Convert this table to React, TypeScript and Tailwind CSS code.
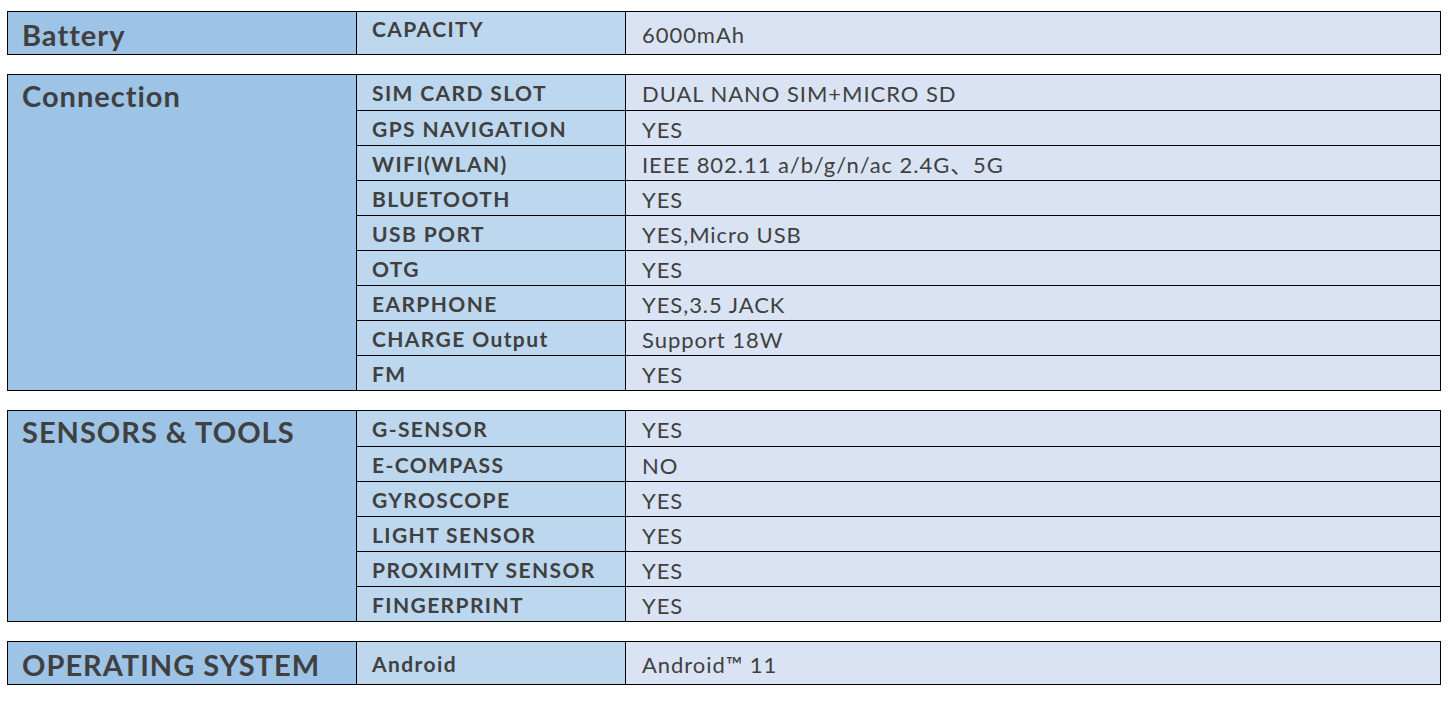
import React from 'react'

type Row = [string, string]

interface SpecSection {
    title: string;
    rows: Row[];
    align: 'top' | 'center';
}

const sections: SpecSection[] = [
    { title: 'Battery', align: 'center', rows: [['CAPACITY', '6000mAh']] },
    {
        title: 'Connection',
        align: 'top',
        rows: [
            ['SIM CARD SLOT', 'DUAL NANO SIM+MICRO SD'],
            ['GPS NAVIGATION', 'YES'],
            ['WIFI(WLAN)', 'IEEE 802.11 a/b/g/n/ac 2.4G、5G'],
            ['BLUETOOTH', 'YES'],
            ['USB PORT', 'YES,Micro USB'],
            ['OTG', 'YES'],
            ['EARPHONE', 'YES,3.5 JACK'],
            ['CHARGE Output', 'Support 18W'],
            ['FM', 'YES'],
        ],
    },
    {
        title: 'SENSORS & TOOLS',
        align: 'top',
        rows: [
            ['G-SENSOR', 'YES'],
            ['E-COMPASS', 'NO'],
            ['GYROSCOPE', 'YES'],
            ['LIGHT SENSOR', 'YES'],
            ['PROXIMITY SENSOR', 'YES'],
            ['FINGERPRINT', 'YES'],
        ],
    },
    { title: 'OPERATING SYSTEM', align: 'center', rows: [['Android', 'Android™ 11']] },
]

function SpecBlock({ section }: { section: SpecSection }) {
    const single = section.rows.length === 1
    const isBattery = section.title === 'Battery'

    return (
        <div className="flex w-[1434px] border border-black">
            {/* group title */}
            <div
                className={
                    section.align === 'top'
                        ? 'w-[349px] shrink-0 border-r border-black bg-[#9dc3e6] pl-[14px] pt-[4px] text-[29px] font-bold leading-[34px] tracking-[1px]'
                        : 'flex w-[349px] shrink-0 items-center border-r border-black bg-[#9dc3e6] pl-[14px] pt-[3px] text-[29px] font-bold leading-[34px] tracking-[1px]'
                }
            >
                {section.title}
            </div>

            <div className="flex flex-1 flex-col">
                {section.rows.map(([label, value], i) => (
                    <div
                        key={label}
                        className={
                            (single ? 'h-[42px] ' : 'h-[35px] ') +
                            (i > 0 ? 'border-t border-black ' : '') +
                            'flex'
                        }
                    >
                        <div
                            className={
                                isBattery
                                    ? 'w-[269px] shrink-0 border-r border-black bg-[#bdd7ee] pl-[15px] pt-[4px] text-[21px] font-bold leading-[26px] tracking-[1.4px]'
                                    : 'flex w-[269px] shrink-0 items-center border-r border-black bg-[#bdd7ee] pl-[15px] pt-[1px] text-[21px] font-bold leading-[26px] tracking-[1.4px]'
                            }
                        >
                            {label}
                        </div>
                        <div className="flex flex-1 items-center bg-[#dae3f3] pl-[16px] pt-[3px] text-[22px] leading-[26px] tracking-[0.95px]">
                            {value}
                        </div>
                    </div>
                ))}
            </div>
        </div>
    )
}

export default function App() {
    return (
        <div className="h-[719px] w-[1450px] bg-white pl-[7px] pt-[11px] font-['Lato','Noto_Sans_CJK_SC',sans-serif] text-[#404040]">
            <div className="flex flex-col gap-[19px]">
                {sections.map((section) => (
                    <SpecBlock key={section.title} section={section} />
                ))}
            </div>
        </div>
    )
}
